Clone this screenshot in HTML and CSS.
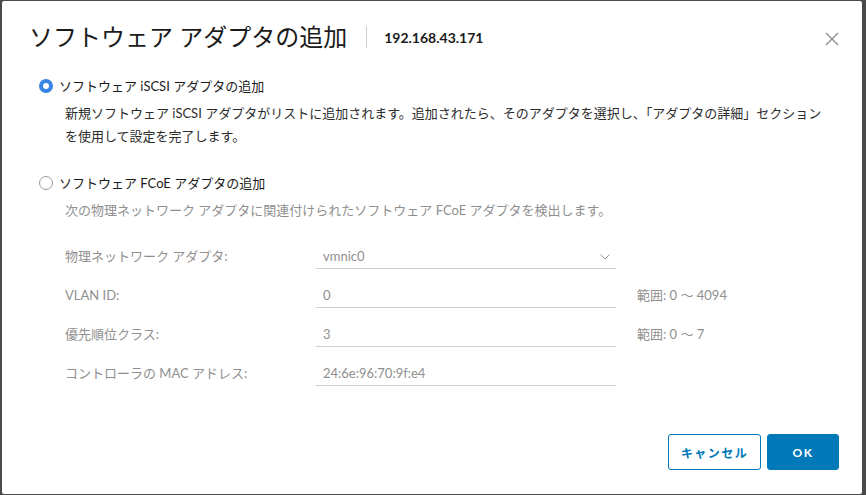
FILE: index.html
```html
<!DOCTYPE html>
<html lang="ja">
<head>
  <meta charset="utf-8">
  <title>ソフトウェア アダプタの追加</title>
  <link rel="stylesheet" href="styles.css">
</head>
<body>
  <div class="modal">
    <div class="modal-header">
      <h1 class="modal-title">ソフトウェア アダプタの追加</h1>
      <span class="divider"></span>
      <span class="host">192.168.43.171</span>
      <button class="close" aria-label="閉じる">
        <svg width="14" height="14" viewBox="0 0 14 14"><path d="M1 1 L13 13 M13 1 L1 13" stroke="#8a8a8a" stroke-width="1.3" fill="none"/></svg>
      </button>
    </div>

    <div class="modal-body">
      <label class="radio-row">
        <span class="radio checked"></span>
        <span>ソフトウェア iSCSI アダプタの追加</span>
      </label>
      <p class="desc">新規ソフトウェア iSCSI アダプタがリストに追加されます。追加されたら、そのアダプタを選択し、「アダプタの詳細」セクション<br>を使用して設定を完了します。</p>

      <label class="radio-row second">
        <span class="radio"></span>
        <span>ソフトウェア FCoE アダプタの追加</span>
      </label>
      <p class="desc disabled">次の物理ネットワーク アダプタに関連付けられたソフトウェア FCoE アダプタを検出します。</p>

      <div class="form">
        <div class="form-row">
          <span class="form-label">物理ネットワーク アダプタ:</span>
          <span class="field select">vmnic0
            <svg class="chevron" width="10" height="6" viewBox="0 0 10 6"><path d="M0.5 0.5 L5 5 L9.5 0.5" stroke="#9a9a9a" stroke-width="1" fill="none"/></svg>
          </span>
        </div>
        <div class="form-row">
          <span class="form-label">VLAN ID:</span>
          <span class="field">0</span>
          <span class="hint">範囲: 0 〜 4094</span>
        </div>
        <div class="form-row">
          <span class="form-label">優先順位クラス:</span>
          <span class="field">3</span>
          <span class="hint">範囲: 0 〜 7</span>
        </div>
        <div class="form-row">
          <span class="form-label">コントローラの MAC アドレス:</span>
          <span class="field">24:6e:96:70:9f:e4</span>
        </div>
      </div>
    </div>

    <div class="modal-footer">
      <button class="btn btn-outline">キャンセル</button>
      <button class="btn btn-primary">OK</button>
    </div>
  </div>
</body>
</html>
```

FILE: styles.css
```css
html, body {
  margin: 0;
  height: 100%;
}

body {
  background: #4a4a4a;
  font-family: Lato, "Noto Sans CJK JP", sans-serif;
  color: #222;
  overflow: hidden;
}

.modal {
  box-sizing: border-box;
  width: 860px;
  height: 493px;
  margin: 1px 4px 1px 2px;
  background: #fff;
  border-radius: 2px;
  display: flex;
  flex-direction: column;
  padding: 0 23px 24px 28px;
}

.modal-header {
  display: flex;
  align-items: center;
  padding-top: 20px;
  height: 32px;
}

.modal-title {
  margin: 0 0 0 -1px;
  font-size: 24px;
  font-weight: 400;
  line-height: 32px;
  color: #1b1b1b;
}

.divider {
  width: 1px;
  height: 22px;
  background: #ccc;
  margin: 0 17px 0 19px;
}

.host {
  font-size: 14px;
  font-weight: 700;
  color: #1b1b1b;
}

.close {
  margin-left: auto;
  padding: 0;
  border: none;
  background: none;
  width: 14px;
  height: 14px;
  display: flex;
  margin-top: 3px;
}

.modal-body {
  padding: 22px 0 0 9px;
  font-size: 13px;
}

.radio-row {
  display: flex;
  align-items: center;
  gap: 6px;
  line-height: 22px;
  color: #1b1b1b;
}

.radio-row.second {
  margin-top: 24px;
}

.radio {
  box-sizing: border-box;
  width: 14px;
  height: 14px;
  border-radius: 50%;
  border: 1px solid #9a9a9a;
  background: #fff;
}

.radio.checked {
  border: 4.5px solid #3784e3;
  background: #fff;
}

.desc {
  margin: 5px 0 0 26px;
  line-height: 23px;
  color: #2b2b2b;
}

.desc.disabled {
  color: #8f8f8f;
}

.form {
  margin: 22px 0 0 26px;
  display: flex;
  flex-direction: column;
  gap: 14px;
}

.form-row {
  display: flex;
  align-items: flex-start;
  height: 25px;
  color: #8f8f8f;
}

.form-label {
  width: 251px;
  line-height: 24px;
}

.field {
  box-sizing: border-box;
  width: 300px;
  height: 25px;
  line-height: 24px;
  padding-left: 7px;
  border-bottom: 1px solid #cfcfcf;
  color: #8f8f8f;
}

.select {
  display: flex;
  align-items: center;
  justify-content: space-between;
  padding-right: 6px;
}

.chevron {
  margin-top: 1px;
}

.hint {
  margin-left: 21px;
  line-height: 24px;
}

.modal-footer {
  margin-top: auto;
  display: flex;
  justify-content: flex-end;
  gap: 6px;
}

.btn {
  box-sizing: border-box;
  height: 36px;
  border-radius: 3px;
  font-family: Lato, "Noto Sans CJK JP", sans-serif;
  font-size: 12px;
  font-weight: 700;
  letter-spacing: 0.12em;
  cursor: pointer;
}

.btn-outline {
  width: 93px;
  background: #fff;
  color: #0079b8;
  border: 1px solid #0079b8;
}

.btn-primary {
  width: 72px;
  background: #0079b8;
  color: #fff;
  border: 1px solid #0079b8;
}
```
